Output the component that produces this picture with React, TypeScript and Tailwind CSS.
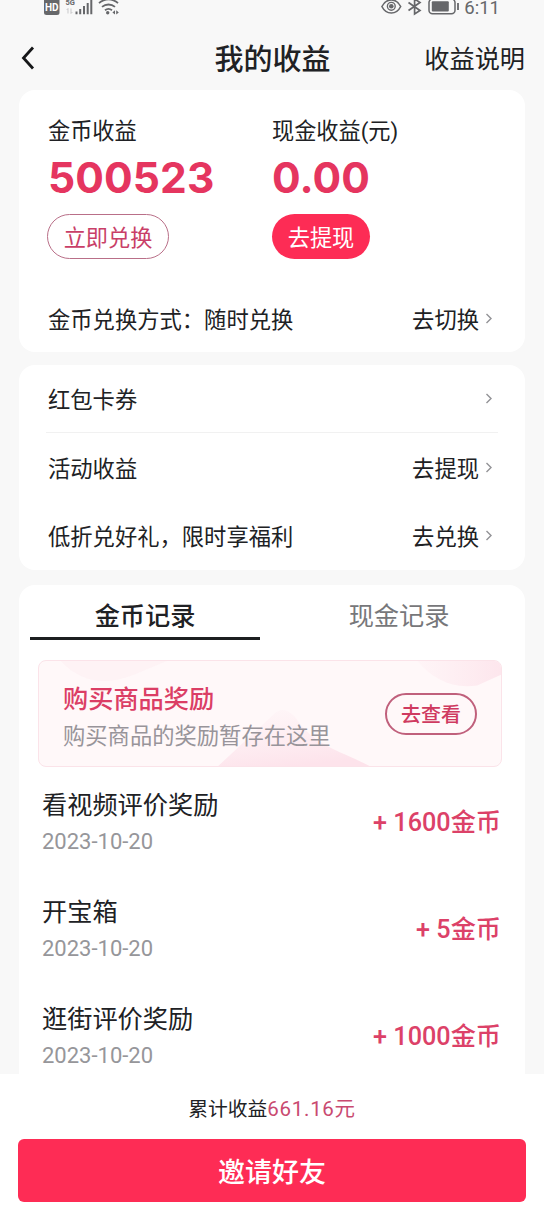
import React from 'react';

type LinkRowProps = {
  label: string;
  action?: string;
  className: string;
};

type CoinRecord = {
  title: string;
  date: string;
  amount: number;
};

const records: CoinRecord[] = [
  { title: '看视频评价奖励', date: '2023-10-20', amount: 1600 },
  { title: '开宝箱', date: '2023-10-20', amount: 5 },
  { title: '逛街评价奖励', date: '2023-10-20', amount: 1000 },
];

const StatusBar: React.FC = () => (
  <div className="flex h-[26px] shrink-0 items-start justify-between pl-[44px] pr-[44px] text-[#66676a]">
    <div className="flex items-start">
      <svg width="76" height="18" viewBox="0 0 76 18" fill="none">
        <rect x="0" y="-2" width="15.5" height="17" rx="2.5" fill="#66676a" />
        <text x="7.8" y="10.8" textAnchor="middle" fontSize="10" fontWeight="700" fontFamily="Roboto, sans-serif" fill="#fff">HD</text>
        <text x="21.5" y="5" fontSize="7.5" fontWeight="700" fontFamily="Roboto, sans-serif" fill="#66676a">5G</text>
        <path d="M24 8.5v5M22.7 10l1.3-1.5M27 8.5v5M27 13.5l1.3-1.5" stroke="#c9c9cb" strokeWidth="1" />
        <path d="M32.5 11.5v2.8M36.2 9v5.3M40 6v8.3M43.7 3v11.3M47.3 -1v15.3" stroke="#66676a" strokeWidth="2" />
        <path d="M55 3.2c5.6-5 13.4-5 19 0M58 6.9c3.8-3.2 9.2-3.2 13 0M61 10.3c2.1-1.7 4.9-1.7 7 0" stroke="#66676a" strokeWidth="1.8" />
        <circle cx="63.7" cy="12.8" r="1.7" fill="#66676a" />
        <path d="M71 10.2v4.4l-2.6-2.2zM72.2 10.2v4.4l2.6-2.2z" fill="#66676a" />
      </svg>
    </div>
    <div className="flex items-start">
      <svg width="80" height="18" viewBox="0 0 80 18" fill="none" stroke="#66676a">
        <path d="M2.9 6.5C7.2-2.2 17.4-2.2 21.7 6.5 17.4 15.2 7.2 15.2 2.9 6.5z" strokeWidth="1.6" />
        <circle cx="12.3" cy="6.3" r="3.9" strokeWidth="1.4" />
        <circle cx="12.3" cy="6.3" r="2.3" fill="#66676a" stroke="none" />
        <path d="M29.5 2.5l11.5 8L35.6 14V-1l5.4 3.5-11.5 8" strokeWidth="1.7" />
        <rect x="50" y="-1" width="26" height="14.8" rx="3.5" strokeWidth="1.5" />
        <rect x="52.8" y="1.2" width="17" height="10.3" rx="1" fill="#66676a" stroke="none" />
        <path d="M79 3v7" strokeWidth="1.8" />
      </svg>
      <span className="ml-[5px] text-[18.5px] leading-[16px]">6:11</span>
    </div>
  </div>
);

const Chevron: React.FC = () => (
  <svg width="8" height="12" viewBox="0 0 8 12" fill="none" stroke="#929296" strokeWidth="1.4" className="-mr-px -mt-[2px]">
    <path d="M1.5 1L6 5.5L1.5 10" />
  </svg>
);

const LinkRow: React.FC<LinkRowProps> = ({ label, action, className }) => (
  <div className={`flex items-center justify-between pt-0.5 text-[22.3px] leading-8 ${className}`}>
    <span>{label}</span>
    <span className="flex items-center gap-[6px]">
      {action}
      <Chevron />
    </span>
  </div>
);

const BannerShapes: React.FC = () => (
  <svg className="absolute inset-0 h-full w-full" viewBox="0 0 464 107" preserveAspectRatio="none">
    <defs>
      <linearGradient id="shade" x1="0.2" y1="0" x2="0.5" y2="1">
        <stop offset="0" stopColor="#fdecf1" stopOpacity="0.2" />
        <stop offset="1" stopColor="#fde3eb" />
      </linearGradient>
      <linearGradient id="shadeTop" x1="0" y1="0" x2="1" y2="0">
        <stop offset="0" stopColor="#fde8ee" stopOpacity="0.2" />
        <stop offset="1" stopColor="#fde6ed" />
      </linearGradient>
    </defs>
    <path d="M22 0H128L95 14C70 24 44 24 22 0z" fill="#fdeef2" opacity="0.5" />
    <path d="M180 107L236 54Q246 44 258 58C276 86 302 91 332 107z" fill="url(#shade)" />
    <path d="M380 0H464V14L440 25C415 29 395 18 380 0z" fill="url(#shadeTop)" />
  </svg>
);

const RecordRow: React.FC<CoinRecord> = ({ title, date, amount }) => (
  <div className="flex h-[107px] items-start justify-between">
    <div>
      <div className="text-[25.2px] leading-9">{title}</div>
      <div className="mt-[2px] text-[22px] leading-8 text-[#96969a]">{date}</div>
    </div>
    <div className="mt-[17px] text-[25.2px] font-medium leading-9 text-[#dc4168]">+ {amount}金币</div>
  </div>
);

const App: React.FC = () => {
  return (
    <div className="flex h-[1215px] w-[544px] flex-col overflow-hidden bg-[#f8f8f8] font-[Roboto,'Noto_Sans_CJK_SC',sans-serif] text-[#202124]">
      <StatusBar />
      <header className="grid h-16 shrink-0 grid-cols-3 items-center pl-[21px] pr-[19px]">
        <svg width="14" height="24" viewBox="0 0 14 24" fill="none" stroke="#161719" strokeWidth="2.8">
          <path d="M12 1.5L2.5 12L12 22.5" />
        </svg>
        <h1 className="-ml-px whitespace-nowrap pt-1 text-center text-[29px] font-medium leading-10">我的收益</h1>
        <span className="whitespace-nowrap pt-1 text-right text-[25.2px] leading-10">收益说明</span>
      </header>

      <main className="flex min-h-0 flex-1 flex-col overflow-hidden px-[19px]">
        <section className="h-[262px] shrink-0 rounded-2xl bg-white px-[29px] pt-[25px]">
          <div className="flex">
            <div className="w-[224px]">
              <div className="text-[22.2px] leading-8">金币收益</div>
              <div className="mt-[7px] font-[Inter,sans-serif] text-[42.5px] font-bold leading-[48px] tracking-[0.1px] text-[#e5355f]">500523</div>
              <button className="-ml-px mt-[12px] h-[45px] w-[122px] rounded-full border border-[#b96f88] pt-0.5 text-[22.2px] leading-8 text-[#c93f68]">立即兑换</button>
            </div>
            <div>
              <div className="text-[22.2px] leading-8">现金收益(元)</div>
              <div className="mt-[7px] font-[Inter,sans-serif] text-[42.5px] font-bold leading-[48px] tracking-[0.1px] text-[#e5355f]">0.00</div>
              <button className="mt-[12px] h-[45px] w-[98px] rounded-full bg-[#fd2c55] pt-0.5 text-[22.2px] leading-8 text-white">去提现</button>
            </div>
          </div>
          <LinkRow label="金币兑换方式：随时兑换" action="去切换" className="mt-[43px] pr-[4px]" />
        </section>

        <section className="mt-[13px] h-[205px] shrink-0 rounded-2xl bg-white px-[27px]">
          <LinkRow label="红包卡券" className="h-[68px] border-b border-[#f1f1f1] pl-[2px] pr-[6px]" />
          <LinkRow label="活动收益" action="去提现" className="h-[69px] pl-[2px] pr-[6px]" />
          <LinkRow label="低折兑好礼，限时享福利" action="去兑换" className="h-[68px] pl-[2px] pr-[6px]" />
        </section>

        <section className="mt-[15px] flex-1 rounded-t-2xl bg-white">
          <div className="flex pl-[11px] text-[25.2px] leading-9">
            <div className="h-[55px] w-[230px] shrink-0 border-b-[3px] border-[#1d1f20] pt-[14px] text-center font-medium">金币记录</div>
            <div className="ml-[23px] w-[232px] shrink-0 pt-[14px] text-center text-[#77777a]">现金记录</div>
          </div>

          <div className="relative ml-[19px] mt-5 h-[107px] w-[464px] overflow-hidden rounded-lg border border-[#fbe3e9] bg-[#fff8f9]">
            <BannerShapes />
            <div className="relative flex h-full items-center justify-between pl-[24px] pr-[24px]">
              <div className="pt-[8px]">
                <div className="text-[25.2px] font-medium leading-9 text-[#db3e65]">购买商品奖励</div>
                <div className="text-[22.3px] leading-[36px] text-[#98949a]">购买商品的奖励暂存在这里</div>
              </div>
              <button className="h-[42px] w-[92px] rounded-full border-2 border-[#c0607c] pt-0.5 text-[20px] font-medium leading-7 text-[#cf3a60]">去查看</button>
            </div>
          </div>

          <div className="pl-[23px] pr-6 pt-[21px]">
            {records.map((r) => (
              <RecordRow key={r.title} {...r} />
            ))}
          </div>
        </section>
      </main>

      <footer className="h-[141px] shrink-0 bg-white px-[18px] pt-[19px]">
        <div className="h-8 text-center text-[19.8px] leading-8">
          累计收益<span className="text-[20.5px] tracking-[0.7px] text-[#c94a70]">661.16元</span>
        </div>
        <button className="mt-[14px] h-[63px] w-full rounded-md bg-[#fe2c55] pt-1 text-[27px] font-medium leading-10 text-white">邀请好友</button>
      </footer>
    </div>
  );
};

export default App;
